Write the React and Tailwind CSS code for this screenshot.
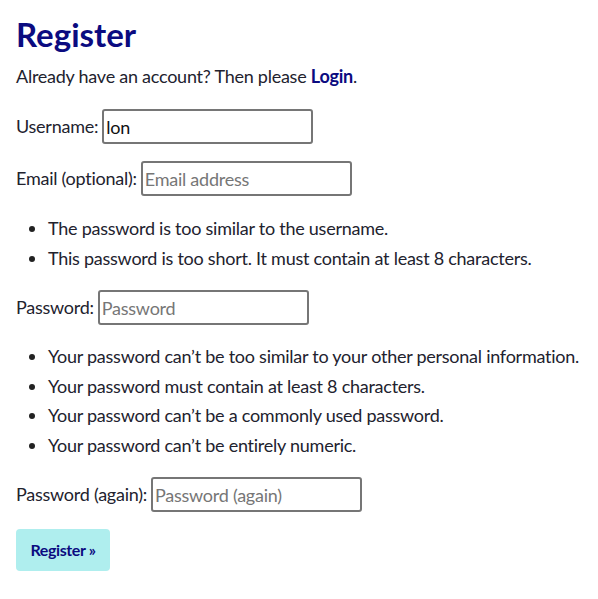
import React from "react";

function Field({ label, placeholder, value }) {
  return (
    <div className="flex items-center h-[35px]">
      <label className="mr-[4px] whitespace-nowrap">{label}</label>
      <input
        type="text"
        defaultValue={value}
        placeholder={placeholder}
        className="w-[211px] h-[35px] border-2 border-[#767676] rounded-[3px] px-[2px] text-[18px] text-[#111] placeholder:text-[#767676] bg-white outline-none"
      />
    </div>
  );
}

function Bullets({ items, leading }) {
  return (
    <ul className={"list-disc pl-[32px] marker:text-[#222] whitespace-nowrap " + leading}>
      {items.map((t) => (
        <li key={t}>{t}</li>
      ))}
    </ul>
  );
}

export default function App() {
  return (
    <div
      className="bg-white min-h-[599px] px-[16px] pt-[12px] text-[18px] text-[#22222e] tracking-[-0.25px]"
      style={{ fontFamily: "Lato, 'Open Sans', sans-serif" }}
    >
      <h1 className="text-[33px] leading-[44px] font-bold text-[#0b0b80] tracking-[0px]">
        Register
      </h1>
      <p className="mt-[5px] leading-[30px]">
        Already have an account? Then please{" "}
        <a href="#" className="font-bold text-[#0b0b80]">Login</a>.
      </p>
      <div className="mt-[18px] flex flex-col gap-[17px]">
        <Field label="Username:" value="lon" />
        <Field label="Email (optional):" placeholder="Email address" />
        <Bullets
          leading="leading-[30px]"
          items={[
            "The password is too similar to the username.",
            "This password is too short. It must contain at least 8 characters.",
          ]}
        />
        <Field label="Password:" placeholder="Password" />
        <Bullets
          leading="leading-[29.5px]"
          items={[
            "Your password can\u2019t be too similar to your other personal information.",
            "Your password must contain at least 8 characters.",
            "Your password can\u2019t be a commonly used password.",
            "Your password can\u2019t be entirely numeric.",
          ]}
        />
        <Field label="Password (again):" placeholder="Password (again)" />
        <div>
          <button className="w-[94px] h-[42px] bg-[#afeeee] rounded-[4px] text-[#0b0b80] font-bold text-[16px] tracking-[-0.4px]">
            Register »
          </button>
        </div>
      </div>
    </div>
  );
}
